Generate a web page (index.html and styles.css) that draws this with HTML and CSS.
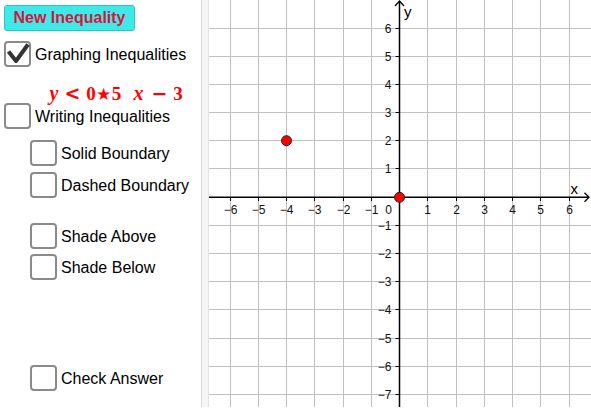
FILE: index.html
```html
<!DOCTYPE html>
<html>
<head>
<meta charset="utf-8">
<link rel="stylesheet" href="styles.css">
</head>
<body>
<div class="app">
  <div class="panel">
    <button class="btn">New Inequality</button>
    <div class="row r-graph">
      <span class="box">
        <svg class="tick" width="26" height="26" viewBox="0 0 26 26"><polyline points="3.5,9.5 11,19 23,2.5" fill="none" stroke="#333" stroke-width="4" stroke-linejoin="round"/></svg>
      </span>
      <span class="lbl">Graphing Inequalities</span>
    </div>
    <div class="formula">
      <span class="tk mi t-y">y</span>
      <span class="tk mo t-lt">&lt;</span>
      <span class="tk mn t-0">0</span>
      <span class="tk star t-star">★</span>
      <span class="tk mn t-5">5</span>
      <span class="tk mi t-x">x</span>
      <span class="tk mo t-minus">−</span>
      <span class="tk mn t-3">3</span>
    </div>
    <div class="row r-write"><span class="box"></span><span class="lbl">Writing Inequalities</span></div>
    <div class="row sub r-solid"><span class="box"></span><span class="lbl">Solid Boundary</span></div>
    <div class="row sub r-dashed"><span class="box"></span><span class="lbl">Dashed Boundary</span></div>
    <div class="row sub r-above"><span class="box"></span><span class="lbl">Shade Above</span></div>
    <div class="row sub r-below"><span class="box"></span><span class="lbl">Shade Below</span></div>
    <div class="row sub r-check"><span class="box"></span><span class="lbl">Check Answer</span></div>
  </div>
  <div class="divider"></div>
  <div class="graph">
    <svg width="382" height="407" viewBox="0 0 382 407">
      <g stroke="#c0c0c0" stroke-width="1">
        <line x1="21.5" y1="0" x2="21.5" y2="407"/>
        <line x1="49.5" y1="0" x2="49.5" y2="407"/>
        <line x1="77.5" y1="0" x2="77.5" y2="407"/>
        <line x1="105.5" y1="0" x2="105.5" y2="407"/>
        <line x1="134.5" y1="0" x2="134.5" y2="407"/>
        <line x1="162.5" y1="0" x2="162.5" y2="407"/>
        <line x1="218.5" y1="0" x2="218.5" y2="407"/>
        <line x1="247.5" y1="0" x2="247.5" y2="407"/>
        <line x1="275.5" y1="0" x2="275.5" y2="407"/>
        <line x1="303.5" y1="0" x2="303.5" y2="407"/>
        <line x1="331.5" y1="0" x2="331.5" y2="407"/>
        <line x1="360.5" y1="0" x2="360.5" y2="407"/>
        <line x1="0" y1="28.5" x2="382" y2="28.5"/>
        <line x1="0" y1="56.5" x2="382" y2="56.5"/>
        <line x1="0" y1="84.5" x2="382" y2="84.5"/>
        <line x1="0" y1="112.5" x2="382" y2="112.5"/>
        <line x1="0" y1="140.5" x2="382" y2="140.5"/>
        <line x1="0" y1="168.5" x2="382" y2="168.5"/>
        <line x1="0" y1="225.5" x2="382" y2="225.5"/>
        <line x1="0" y1="253.5" x2="382" y2="253.5"/>
        <line x1="0" y1="281.5" x2="382" y2="281.5"/>
        <line x1="0" y1="309.5" x2="382" y2="309.5"/>
        <line x1="0" y1="338.5" x2="382" y2="338.5"/>
        <line x1="0" y1="366.5" x2="382" y2="366.5"/>
        <line x1="0" y1="394.5" x2="382" y2="394.5"/>
      </g>
      <g stroke="#000" stroke-width="1.5" fill="none">
        <line x1="0" y1="197.3" x2="380" y2="197.3"/>
        <line x1="190.5" y1="1" x2="190.5" y2="407"/>
        <polyline points="186,6 190.5,1 195,6" stroke-width="1.3"/>
        <polyline points="375.5,192.8 380,197.3 375.5,201.8" stroke-width="1.3"/>
      </g>
      <g stroke="#000" stroke-width="1">
        <line x1="21.5" y1="197" x2="21.5" y2="201"/>
        <line x1="49.5" y1="197" x2="49.5" y2="201"/>
        <line x1="77.5" y1="197" x2="77.5" y2="201"/>
        <line x1="105.5" y1="197" x2="105.5" y2="201"/>
        <line x1="134.5" y1="197" x2="134.5" y2="201"/>
        <line x1="162.5" y1="197" x2="162.5" y2="201"/>
        <line x1="218.5" y1="197" x2="218.5" y2="201"/>
        <line x1="247.5" y1="197" x2="247.5" y2="201"/>
        <line x1="275.5" y1="197" x2="275.5" y2="201"/>
        <line x1="303.5" y1="197" x2="303.5" y2="201"/>
        <line x1="331.5" y1="197" x2="331.5" y2="201"/>
        <line x1="360.5" y1="197" x2="360.5" y2="201"/>
        <line x1="186.5" y1="28.5" x2="190.5" y2="28.5"/>
        <line x1="186.5" y1="56.5" x2="190.5" y2="56.5"/>
        <line x1="186.5" y1="84.5" x2="190.5" y2="84.5"/>
        <line x1="186.5" y1="112.5" x2="190.5" y2="112.5"/>
        <line x1="186.5" y1="140.5" x2="190.5" y2="140.5"/>
        <line x1="186.5" y1="168.5" x2="190.5" y2="168.5"/>
        <line x1="186.5" y1="225.5" x2="190.5" y2="225.5"/>
        <line x1="186.5" y1="253.5" x2="190.5" y2="253.5"/>
        <line x1="186.5" y1="281.5" x2="190.5" y2="281.5"/>
        <line x1="186.5" y1="309.5" x2="190.5" y2="309.5"/>
        <line x1="186.5" y1="338.5" x2="190.5" y2="338.5"/>
        <line x1="186.5" y1="366.5" x2="190.5" y2="366.5"/>
        <line x1="186.5" y1="394.5" x2="190.5" y2="394.5"/>
      </g>
      <g class="ax" text-anchor="middle">
        <text x="21.5" y="213.5">−6</text>
        <text x="49.5" y="213.5">−5</text>
        <text x="77.5" y="213.5">−4</text>
        <text x="105.5" y="213.5">−3</text>
        <text x="134.5" y="213.5">−2</text>
        <text x="162.5" y="213.5">−1</text>
        <text x="218.5" y="213.5">1</text>
        <text x="247.5" y="213.5">2</text>
        <text x="275.5" y="213.5">3</text>
        <text x="303.5" y="213.5">4</text>
        <text x="331.5" y="213.5">5</text>
        <text x="360.5" y="213.5">6</text>
      </g>
      <g class="ax" text-anchor="end">
        <text x="183" y="213.5">0</text>
        <text x="182.5" y="32.8">6</text>
        <text x="182.5" y="60.8">5</text>
        <text x="182.5" y="88.8">4</text>
        <text x="182.5" y="116.8">3</text>
        <text x="182.5" y="144.8">2</text>
        <text x="182.5" y="172.8">1</text>
        <text x="182.5" y="229.8">−1</text>
        <text x="182.5" y="257.8">−2</text>
        <text x="182.5" y="285.8">−3</text>
        <text x="182.5" y="313.8">−4</text>
        <text x="182.5" y="342.8">−5</text>
        <text x="182.5" y="370.8">−6</text>
        <text x="182.5" y="398.8">−7</text>
      </g>
      <text class="axname" x="195" y="16.5">y</text>
      <text class="axname" x="361.5" y="194">x</text>
      <circle cx="77.5" cy="140.7" r="5" fill="#ff0000" stroke="#222" stroke-width="1"/>
      <circle cx="190.5" cy="197.3" r="5" fill="#ff0000" stroke="#222" stroke-width="1"/>
    </svg>
  </div>
</div>
</body>
</html>
```

FILE: styles.css
```css
html, body {
  margin: 0;
  padding: 0;
  background: #fff;
}
body {
  width: 591px;
  height: 409px;
  overflow: hidden;
  font-family: "Liberation Sans", Arial, sans-serif;
  color: #000;
}
.app {
  display: flex;
  height: 407px;
}
.panel {
  width: 201px;
  flex: none;
  display: flex;
  flex-direction: column;
  align-items: flex-start;
  padding-top: 5px;
  box-sizing: border-box;
}
.btn {
  margin-left: 4px;
  width: 131px;
  height: 26px;
  padding: 0;
  background: #3fe9e9;
  border: 1px solid #2bc6c6;
  border-radius: 3px;
  color: #dc143c;
  font-family: "Liberation Sans", Arial, sans-serif;
  font-weight: bold;
  font-size: 16px;
  line-height: 24px;
}
.row {
  display: flex;
  align-items: center;
  height: 26px;
  margin-left: 4px;
}
.row.sub {
  margin-left: 30px;
}
.box {
  width: 27px;
  height: 26px;
  box-sizing: border-box;
  border: 2px solid #8a8a8a;
  border-radius: 4px;
  background: #fff;
  flex: none;
  position: relative;
}
.tick {
  position: absolute;
  left: -1px;
  top: -1px;
}
.lbl {
  margin-left: 4px;
  padding-top: 2px;
  font-size: 16px;
  line-height: 26px;
  white-space: nowrap;
}
.r-graph { margin-top: 10px; }
.formula {
  margin-top: 16px;
  margin-left: 47px;
  height: 20px;
  display: flex;
  align-items: baseline;
  color: #ff0000;
  font-family: "Liberation Serif", "Times New Roman", serif;
  font-weight: bold;
  font-size: 19px;
  line-height: 20px;
  white-space: nowrap;
}
.tk {
  display: inline-block;
  text-align: center;
}
.mi {
  font-style: italic;
  font-size: 20px;
}
.mo {
  font-family: "DejaVu Sans", sans-serif;
  font-weight: bold;
  font-size: 19px;
}
.star {
  font-family: "DejaVu Sans", sans-serif;
  font-weight: normal;
  font-size: 17px;
}
.t-y { width: 14px; }
.t-lt { width: 19px; margin-left: 2px; }
.t-0 { width: 10px; margin-left: 4px; }
.t-star { width: 15px; }
.t-5 { width: 11px; }
.t-x { width: 15px; margin-left: 9px; }
.t-minus { width: 19px; margin-left: 4px; }
.t-3 { width: 12px; margin-left: 3px; }
.r-write { margin-top: 0; }
.r-solid { margin-top: 11px; }
.r-dashed { margin-top: 6px; }
.r-above { margin-top: 25px; }
.r-below { margin-top: 5px; }
.r-check { margin-top: 85px; }
.divider {
  width: 8px;
  flex: none;
  box-sizing: border-box;
  height: 407px;
  background: #f5f5f5;
  border-left: 1px solid #d8d8d8;
  border-right: 1px solid #e4e4e4;
}
.graph {
  flex: 1;
  height: 407px;
  overflow: hidden;
}
.graph svg {
  display: block;
}
.ax {
  font-family: "Liberation Sans", Arial, sans-serif;
  font-size: 12px;
  fill: #111;
}
.axname {
  font-family: "Liberation Sans", Arial, sans-serif;
  font-size: 15px;
  fill: #000;
}
```
